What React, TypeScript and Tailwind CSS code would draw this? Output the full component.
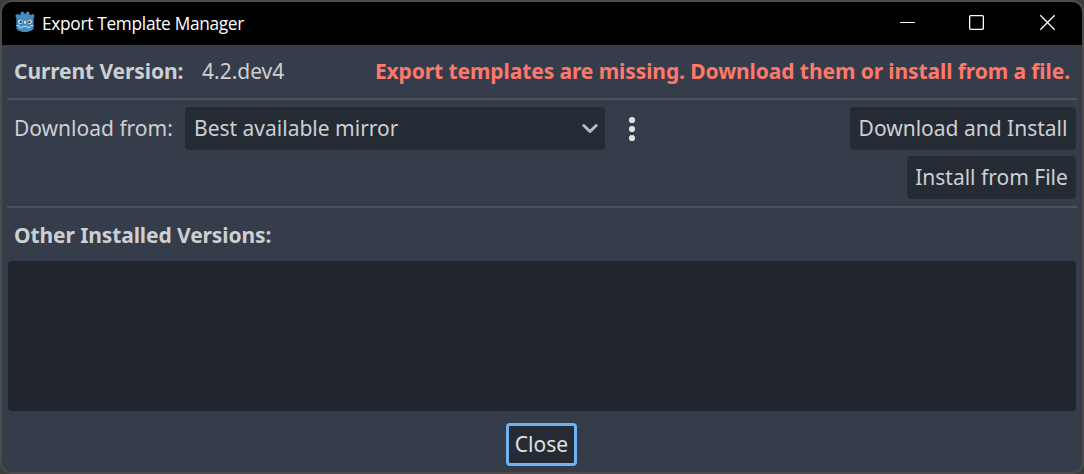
import type { ReactNode } from "react";

function AppIcon() {
  return (
    <svg className="h-[22px] w-[22px] shrink-0" viewBox="0 0 22 22">
      <path
        d="M6.600 1.300 9.200.5l.9 1.900h1.800l.9-1.900 2.600.8v2.100l1.300.7 1.800-1.400 2.300 2-1.200 2.200v9.900c0 2.500-4 4.200-8.600 4.200s-8.600-1.700-8.600-4.200V6.900L1.200 4.700l2.300-2 1.800 1.400 1.300-.7z"
        fill="#478cbf"
      />
      <path
        d="M2.400 14.500l3 .2.500 1.800 2.400.2.500-1.300h4.400l.5 1.300 2.400-.2.500-1.800 3-.2"
        fill="none"
        stroke="#c8def0"
        strokeWidth="0.900"
      />
      <circle cx="6.400" cy="10.800" r="2.100" fill="#fff" />
      <circle cx="15.600" cy="10.800" r="2.100" fill="#fff" />
      <circle cx="6.700" cy="10.900" r="1.300" fill="#414042" />
      <circle cx="15.300" cy="10.900" r="1.300" fill="#414042" />
      <path d="M11 10.300v2.200" stroke="#fff" strokeWidth="1.200" strokeLinecap="round" />
    </svg>
  );
}

function Button({ children, className }: { children: ReactNode; className: string }) {
  return (
    <button
      className={`flex h-[43px] items-center justify-center rounded-[4px] bg-[#252b34] pb-px ${className}`}
    >
      {children}
    </button>
  );
}

function Separator() {
  return <div className="-mx-px h-0.5 shrink-0 bg-[#4b515d]" />;
}

export default function App() {
  return (
    <div className="h-[474px] w-[1084px] overflow-hidden bg-[#3d3d3d] font-['Noto_Sans',sans-serif] text-[21px] leading-[30px] whitespace-nowrap text-[#cdcfd2]">
      <div className="flex h-full flex-col overflow-hidden rounded-[12px] border-2 border-[#4b4b4b] bg-[#363d4a]">
        <header className="flex h-[43px] shrink-0 items-center bg-black pl-3 text-white">
          <div className="pb-[3px]">
            <AppIcon />
          </div>
          <h1 className="ml-1.5 pt-px font-['Open_Sans',sans-serif] text-[17.3px] leading-6 font-normal tracking-[-0.3px]">
            Export Template Manager
          </h1>
          <svg className="ml-auto h-[43px] w-[210px]" viewBox="0 0 210 43" fill="none" stroke="#fff" strokeWidth="1.3">
            <path d="M28 20.500h15" strokeWidth="1" />
            <rect x="97.650" y="13.650" width="13.700" height="13.700" rx="1" />
            <path d="M168.300 13.300l14.400 14.400m0-14.400L168.300 27.700" />
          </svg>
        </header>

        <main className="flex min-h-0 flex-1 flex-col px-1.5">
          <div className="flex h-[53px] shrink-0 items-center px-1.5 pb-0.5 font-bold">
            <span className="w-[188px] tracking-[-0.1px]">Current Version:</span>
            <span className="font-normal">4.2.dev4</span>
            <span className="ml-auto tracking-[-0.09px] text-[#ff786b]">
              Export templates are missing. Download them or install from a file.
            </span>
          </div>
          <Separator />

          <div className="mt-[7px] flex h-[92px] shrink-0 items-start">
            <span className="flex h-[43px] w-[177px] items-center pb-px pl-1.5">Download from:</span>
            <button className="flex h-[43px] w-[420px] items-center justify-between rounded-[4px] bg-[#252b34] pr-1.5 pl-[9px]">
              <span className="pb-px">Best available mirror</span>
              <svg className="h-[18px] w-[18px]" viewBox="0 0 18 18" fill="none">
                <path d="M2.800 5.500 9 11.500 15.200 5.500" stroke="#b8bbbf" strokeWidth="3" strokeLinecap="round" strokeLinejoin="round" />
              </svg>
            </button>
            <svg className="ml-4 h-[43px] w-[22px]" viewBox="0 0 22 43" fill="#e0e1e2">
              <circle cx="11" cy="13" r="3.100" />
              <circle cx="11" cy="22" r="3.100" />
              <circle cx="11" cy="31" r="3.100" />
            </svg>
            <div className="ml-auto flex flex-col items-end gap-1.5">
              <Button className="w-[226px]">Download and Install</Button>
              <Button className="w-[169px]">Install from File</Button>
            </div>
          </div>
          <div className="h-[7px] shrink-0" />
          <Separator />

          <h2 className="flex h-[53px] shrink-0 items-center px-1.5 font-bold tracking-[-0.1px]">
            Other Installed Versions:
          </h2>
          <div className="h-[150px] shrink-0 rounded-[4px] bg-[#21252d]" />
          <div className="mt-3 flex justify-center pr-px">
            <Button className="w-[71px] border-[3px] border-[#70b3f2] text-[#dfe0e2]">Close</Button>
          </div>
        </main>
      </div>
    </div>
  );
}
